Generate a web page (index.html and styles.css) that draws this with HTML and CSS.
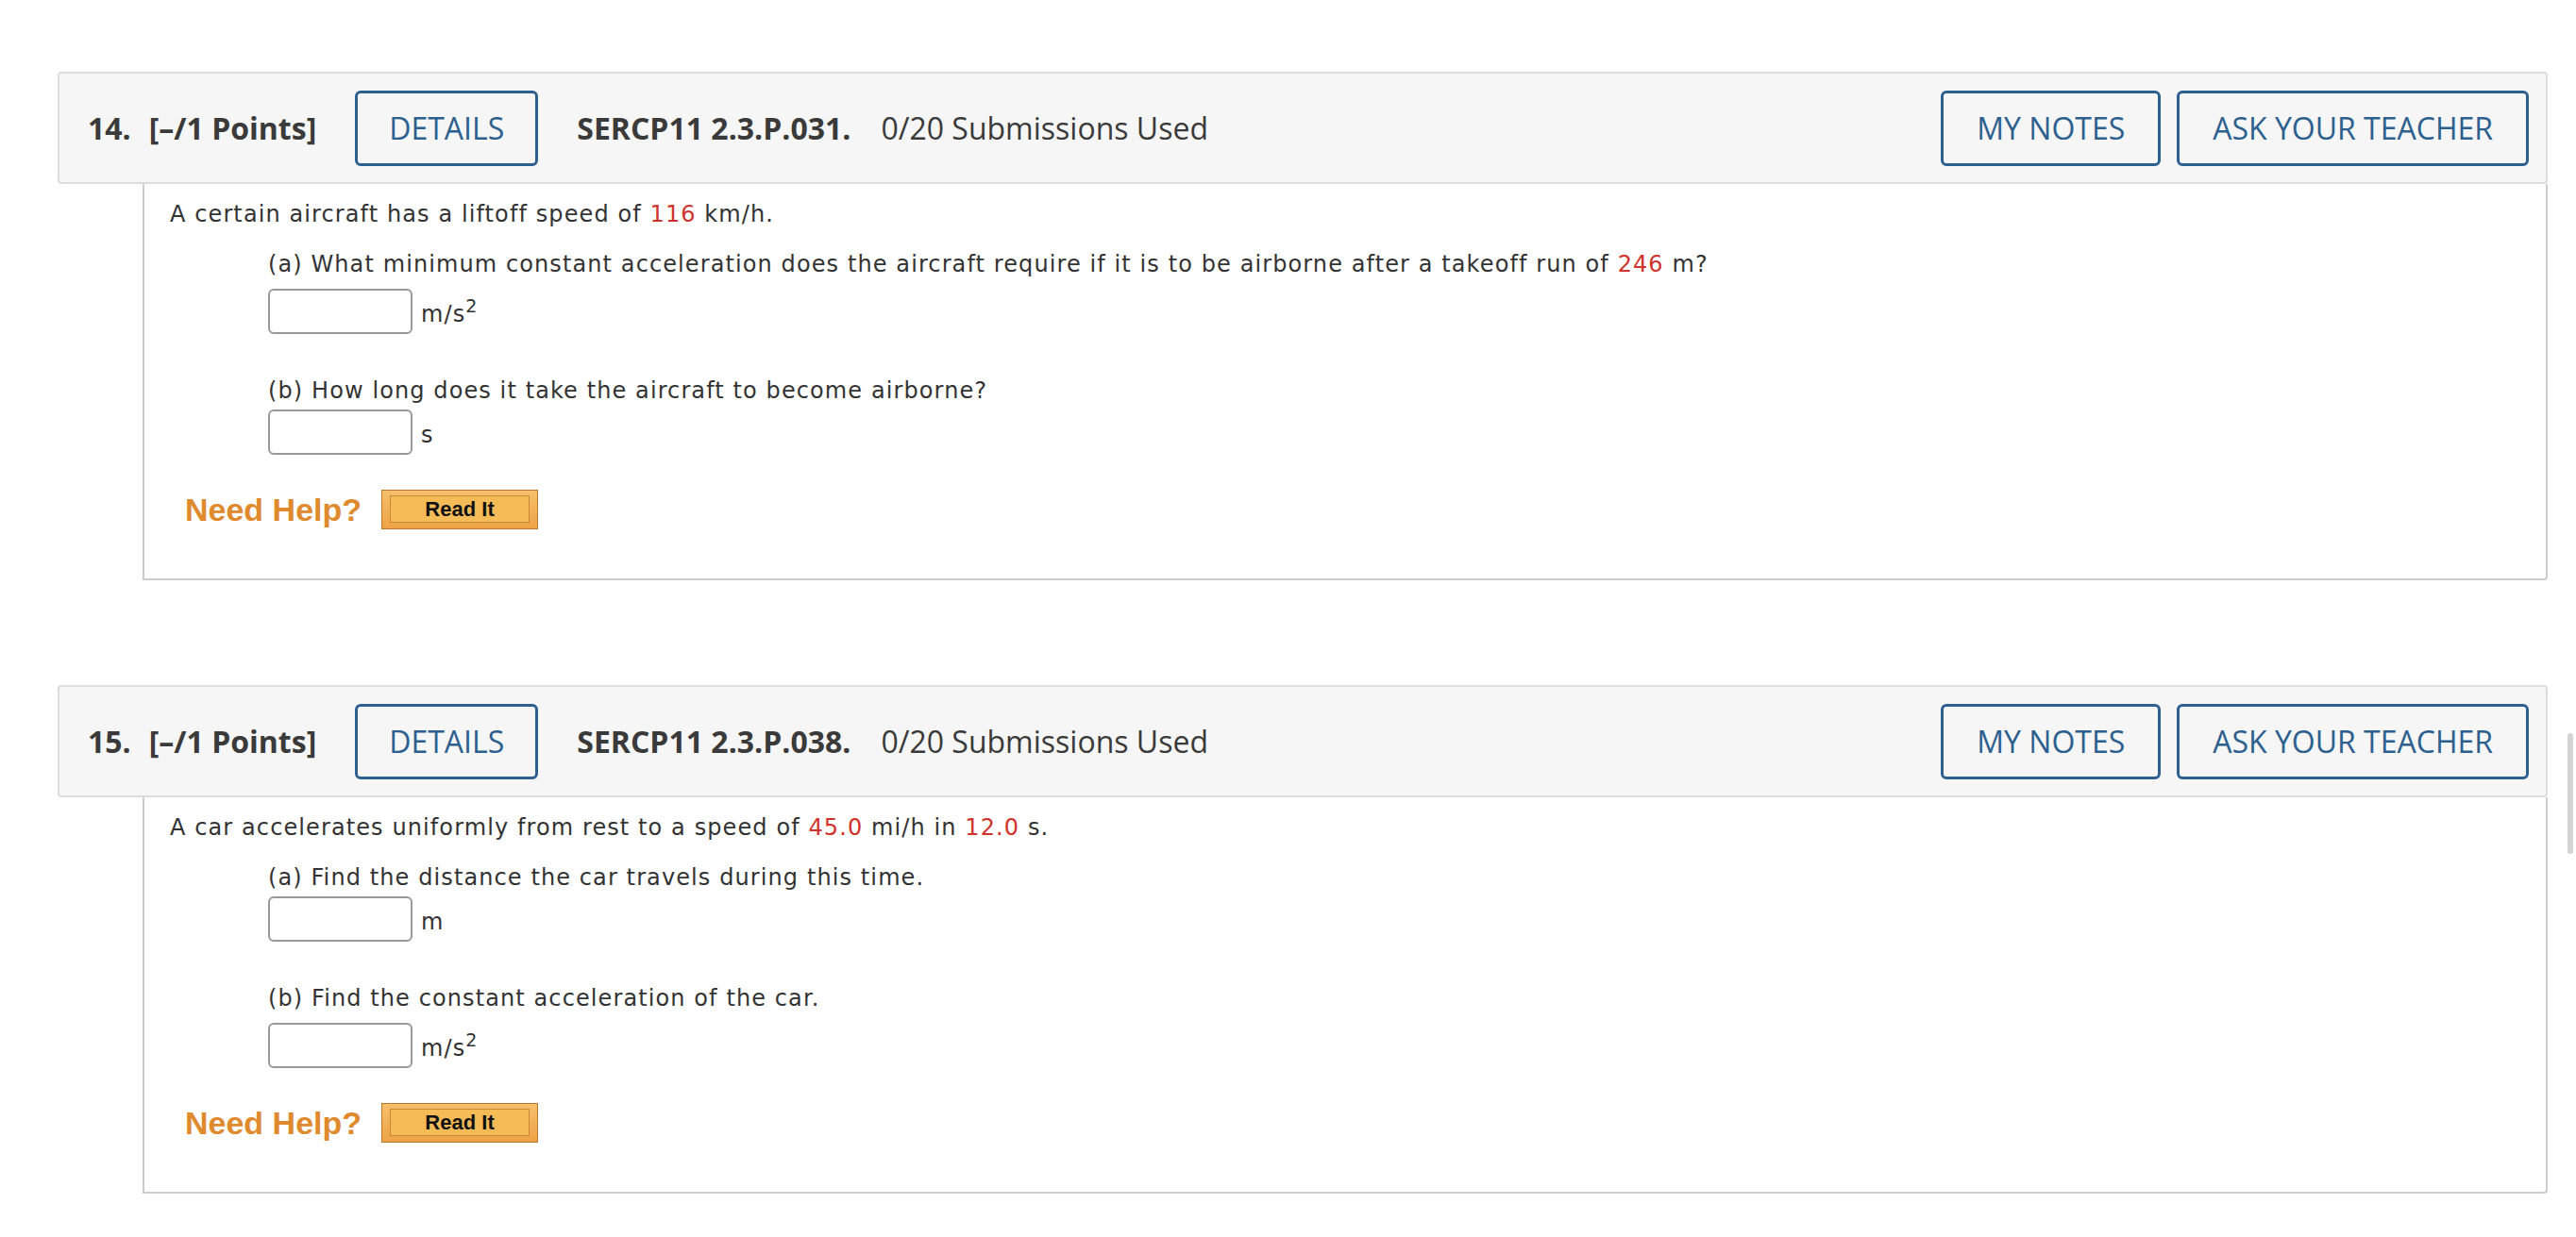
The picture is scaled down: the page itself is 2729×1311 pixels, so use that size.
FILE: index.html
```html
<!DOCTYPE html>
<html lang="en">
<head>
<meta charset="utf-8">
<title>Questions</title>
<link rel="stylesheet" href="styles.css">
</head>
<body>
<main class="page">
  <section class="question">
    <header class="q-head">
      <span class="q-num">14.</span>
      <span class="q-points">[–/1 Points]</span>
      <button class="btn btn-details">DETAILS</button>
      <span class="q-code">SERCP11 2.3.P.031.</span>
      <span class="q-subs">0/20 Submissions Used</span>
      <span class="spacer"></span>
      <button class="btn">MY NOTES</button>
      <button class="btn">ASK YOUR TEACHER</button>
    </header>
    <div class="q-body">
      <p class="intro">A certain aircraft has a liftoff speed of <span class="val">116</span> km/h.</p>
      <div class="part">
        <p class="part-text">(a) What minimum constant acceleration does the aircraft require if it is to be airborne after a takeoff run of <span class="val">246</span> m?</p>
        <div class="answer has-sup"><span class="box"></span><span class="unit">m/s<sup>2</sup></span></div>
      </div>
      <div class="part part-next">
        <p class="part-text">(b) How long does it take the aircraft to become airborne?</p>
        <div class="answer"><span class="box"></span><span class="unit">s</span></div>
      </div>
      <div class="help">
        <span class="need-help">Need Help?</span>
        <span class="readit"><span class="readit-inner">Read It</span></span>
      </div>
    </div>
  </section>

  <section class="question question-next">
    <header class="q-head">
      <span class="q-num">15.</span>
      <span class="q-points">[–/1 Points]</span>
      <button class="btn btn-details">DETAILS</button>
      <span class="q-code">SERCP11 2.3.P.038.</span>
      <span class="q-subs">0/20 Submissions Used</span>
      <span class="spacer"></span>
      <button class="btn">MY NOTES</button>
      <button class="btn">ASK YOUR TEACHER</button>
    </header>
    <div class="q-body">
      <p class="intro">A car accelerates uniformly from rest to a speed of <span class="val">45.0</span> mi/h in <span class="val">12.0</span> s.</p>
      <div class="part">
        <p class="part-text">(a) Find the distance the car travels during this time.</p>
        <div class="answer"><span class="box"></span><span class="unit">m</span></div>
      </div>
      <div class="part part-next">
        <p class="part-text">(b) Find the constant acceleration of the car.</p>
        <div class="answer has-sup"><span class="box"></span><span class="unit">m/s<sup>2</sup></span></div>
      </div>
      <div class="help">
        <span class="need-help">Need Help?</span>
        <span class="readit"><span class="readit-inner">Read It</span></span>
      </div>
    </div>
  </section>
</main>
<div class="scroll-thumb"></div>
</body>
</html>
```

FILE: styles.css
```css
html, body {
  margin: 0;
  padding: 0;
  background: #ffffff;
}

body {
  font-family: "DejaVu Sans", Verdana, sans-serif;
  color: #333333;
}

.page {
  margin-left: 61px;
  width: 2638px;
  padding-top: 76px;
}

.question-next {
  margin-top: 111px;
}

.q-head {
  box-sizing: border-box;
  height: 119px;
  display: flex;
  align-items: center;
  background: #f6f6f6;
  border: 2px solid #dddddd;
  border-radius: 4px;
  padding: 0 18px 0 30px;
  font-family: "Open Sans", "Noto Sans", sans-serif;
  font-size: 32px;
  color: #3a3a3a;
}

.q-num {
  font-weight: 700;
}

.q-points {
  font-weight: 700;
  margin-left: 19px;
}

.q-code {
  font-weight: 700;
  margin-left: 41px;
}

.q-subs {
  margin-left: 32px;
}

.spacer {
  flex: 1;
}

.btn {
  box-sizing: border-box;
  height: 80px;
  padding: 0 35px;
  background: transparent;
  border: 3px solid #2d5f8f;
  border-radius: 6px;
  color: #2d5f8f;
  font-family: "Open Sans", "Noto Sans", sans-serif;
  font-size: 32px;
  font-weight: 400;
  margin-left: 17px;
}

.btn-details {
  margin-left: 41px;
  padding: 0 33px;
}

.q-body {
  margin-left: 90px;
  border: 2px solid #cccccc;
  border-top: none;
  border-radius: 0 0 4px 0;
  padding: 19px 27px 52px 27px;
  font-size: 24px;
  letter-spacing: 1.1px;
  line-height: 26px;
}

.intro {
  margin: 0;
}

.val {
  color: #d0322c;
}

.part {
  margin-left: 104px;
  margin-top: 27px;
}

.part-next {
  margin-top: 47px;
}

.part-text {
  margin: 0;
}

.answer {
  display: flex;
  align-items: center;
  margin-top: 7px;
}

.answer.has-sup {
  margin-top: 13px;
}

.box {
  box-sizing: border-box;
  display: block;
  width: 153px;
  height: 48px;
  border: 2px solid #999999;
  border-radius: 6px;
  background: #ffffff;
}

.unit {
  margin-left: 9px;
  margin-top: 6px;
}

.unit sup {
  font-size: 19px;
  line-height: 0;
  vertical-align: 10px;
}

.help {
  display: flex;
  align-items: center;
  margin-top: 37px;
  margin-left: 16px;
  letter-spacing: 0;
}

.need-help {
  font-family: "Liberation Sans", Arial, sans-serif;
  font-weight: 700;
  font-size: 34px;
  line-height: 42px;
  color: #e08a2e;
}

.readit {
  box-sizing: border-box;
  display: block;
  width: 166px;
  height: 42px;
  margin-left: 21px;
  padding: 5px 8px 6px 8px;
  border: 1px solid #b9782e;
  background: linear-gradient(#f6c06a, #eea244);
}

.readit-inner {
  box-sizing: border-box;
  display: flex;
  align-items: center;
  justify-content: center;
  height: 100%;
  border: 1px solid #c8883a;
  background: #f4bb57;
  font-family: "Liberation Sans", Arial, sans-serif;
  font-weight: 700;
  font-size: 22px;
  color: #111111;
}

.scroll-thumb {
  position: fixed;
  left: 2720px;
  top: 777px;
  width: 6px;
  height: 128px;
  border-radius: 3px;
  background: #d4d4d4;
}
```
